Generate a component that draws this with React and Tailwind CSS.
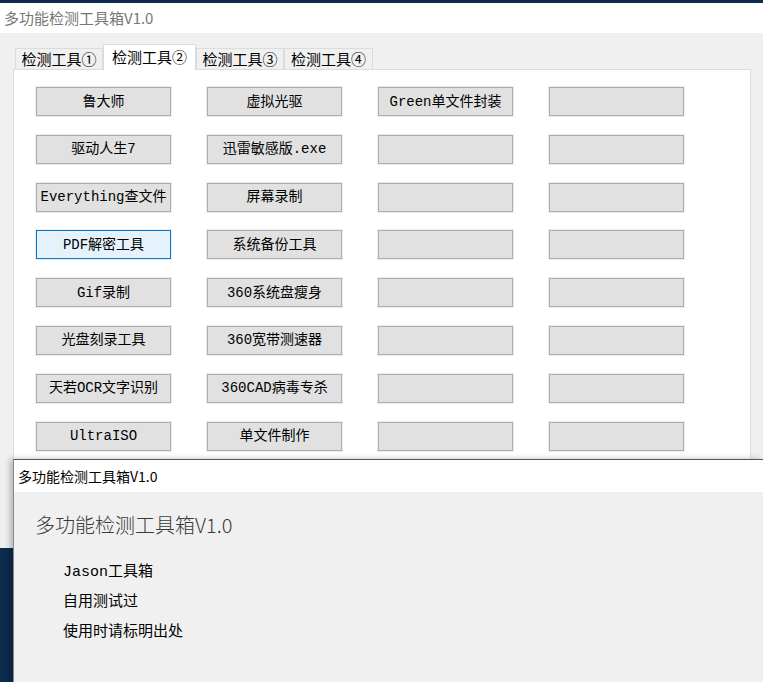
const tabs = ["检测工具①", "检测工具②", "检测工具③", "检测工具④"];
const tabWidths = ["w-[88px]", "w-[93px]", "w-[88px]", "w-[89px]"];

const rows = [
  ["鲁大师", "虚拟光驱", "Green单文件封装", ""],
  ["驱动人生7", "迅雷敏感版.exe", "", ""],
  ["Everything查文件", "屏幕录制", "", ""],
  ["PDF解密工具", "系统备份工具", "", ""],
  ["Gif录制", "360系统盘瘦身", "", ""],
  ["光盘刻录工具", "360宽带测速器", "", ""],
  ["天若OCR文字识别", "360CAD病毒专杀", "", ""],
  ["UltraISO", "单文件制作", "", ""],
];

const Tool = ({ label, hot }) => (
  <button
    className={
      "w-[135px] h-[29px] border text-[14px] text-black leading-none whitespace-nowrap shadow-[0_0_0_1px_#ececec] " +
      (hot ? "bg-[#e5f1fb] border-[#0078d7]" : "bg-[#e1e1e1] border-[#adadad]")
    }
  >
    {label}
  </button>
);

export default function App() {
  return (
    <div className="relative w-[763px] h-[682px] overflow-hidden bg-[#0c2b4d] font-['Liberation_Mono','Noto_Sans_CJK_SC',monospace]">
      {/* main window */}
      <div className="mt-[3px] h-[545px] flex flex-col bg-[#f0f0f0]">
        <div className="h-[30px] bg-white flex items-center pl-[4px] text-[15px] text-[#777] font-['Noto_Sans_CJK_SC',sans-serif]">
          多功能检测工具箱V1.0
        </div>
        <div className="flex-1 flex flex-col px-[13px] pt-[11px]">
          <div className="flex items-end h-[26px] pl-[2px] font-['Noto_Sans_CJK_SC',sans-serif] text-[15px]">
            {tabs.map((t, i) =>
              i === 1 ? (
                <div
                  key={t}
                  className={`${tabWidths[i]} h-[26px] relative z-10 bg-white border border-b-0 border-[#dcdcdc] flex items-center justify-center`}
                >
                  {t}
                </div>
              ) : (
                <div
                  key={t}
                  className={`${tabWidths[i]} h-[22px] bg-[#f0f0f0] border border-b-0 border-[#dcdcdc] flex items-center justify-center`}
                >
                  {t}
                </div>
              )
            )}
          </div>
          <div className="-mt-px flex-1 bg-white border border-[#dcdcdc] pt-[17px] pl-[22px] w-[738px]">
            <div className="grid grid-cols-[repeat(4,135px)] gap-x-[36px] gap-y-[18.8px]">
              {rows.map((r, ri) =>
                r.map((label, ci) => (
                  <Tool key={ri + "-" + ci} label={label} hot={ri === 3 && ci === 0} />
                ))
              )}
            </div>
          </div>
        </div>
      </div>

      {/* about dialog */}
      <div className="absolute left-[13px] top-[459px] right-0 bottom-0 flex flex-col border-t border-l border-t-[#555] border-l-[#8a8a8a] shadow-[-3px_0_6px_rgba(0,0,0,0.25)]">
        <div className="h-[32px] bg-white flex items-center pl-[4px] text-[14px] text-black font-['Noto_Sans_CJK_SC',sans-serif]">
          多功能检测工具箱V1.0
        </div>
        <div className="flex-1 bg-[#f0f0f0] pt-[19px] pl-[21px]">
          <div className="text-[20px] leading-[28px] text-[#3a3a3a] font-light font-['Noto_Sans_CJK_SC',sans-serif]">
            多功能检测工具箱V1.0
          </div>
          <div className="mt-[19px] pl-[28px] text-[15px] leading-[30px] text-black">
            <div>Jason工具箱</div>
            <div>自用测试过</div>
            <div>使用时请标明出处</div>
          </div>
        </div>
      </div>
    </div>
  );
}
